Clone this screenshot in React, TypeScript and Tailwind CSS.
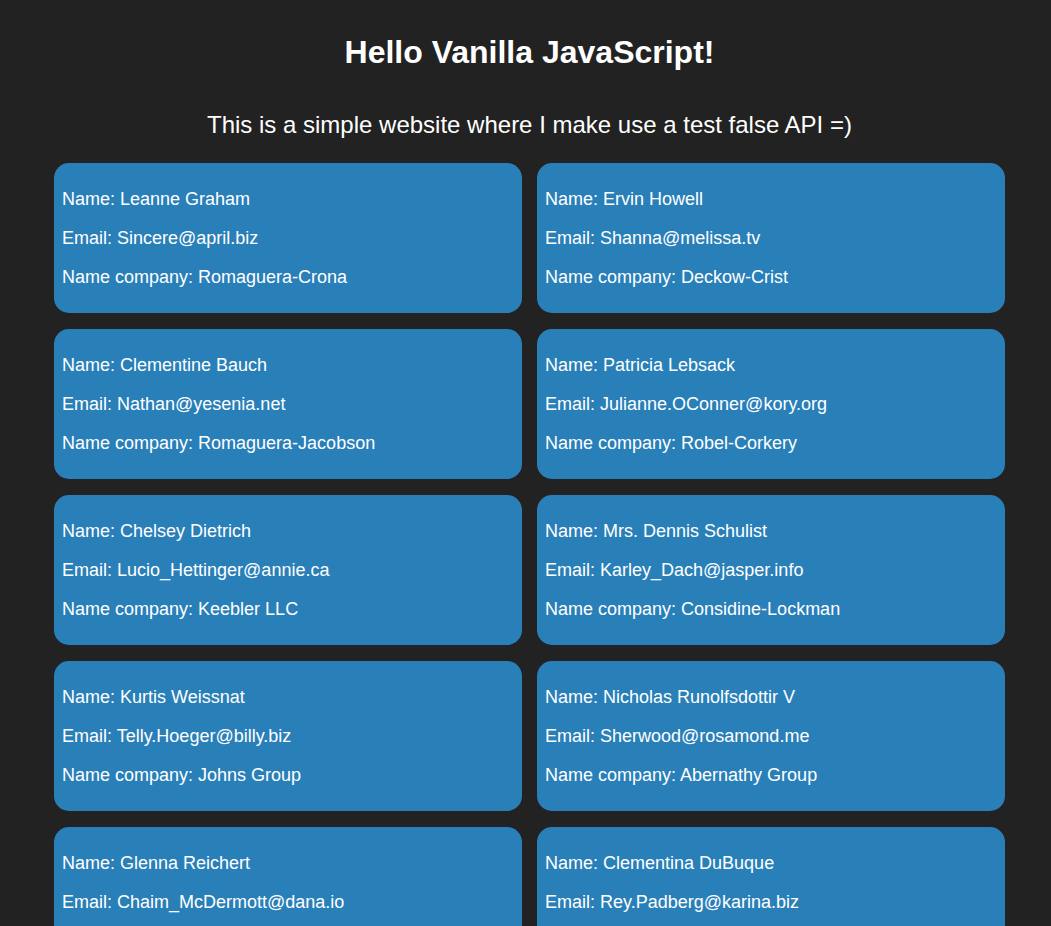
import React from "react";

const users = [
  { name: "Leanne Graham", email: "Sincere@april.biz", company: "Romaguera-Crona" },
  { name: "Ervin Howell", email: "Shanna@melissa.tv", company: "Deckow-Crist" },
  { name: "Clementine Bauch", email: "Nathan@yesenia.net", company: "Romaguera-Jacobson" },
  { name: "Patricia Lebsack", email: "Julianne.OConner@kory.org", company: "Robel-Corkery" },
  { name: "Chelsey Dietrich", email: "Lucio_Hettinger@annie.ca", company: "Keebler LLC" },
  { name: "Mrs. Dennis Schulist", email: "Karley_Dach@jasper.info", company: "Considine-Lockman" },
  { name: "Kurtis Weissnat", email: "Telly.Hoeger@billy.biz", company: "Johns Group" },
  { name: "Nicholas Runolfsdottir V", email: "Sherwood@rosamond.me", company: "Abernathy Group" },
  { name: "Glenna Reichert", email: "Chaim_McDermott@dana.io", company: "Yost and Sons" },
  { name: "Clementina DuBuque", email: "Rey.Padberg@karina.biz", company: "Hoeger LLC" },
];

export default function App() {
  return (
    <div
      className="min-h-screen bg-[#222222] text-white pb-[20px]"
      style={{ fontFamily: '"Liberation Sans", Arial, sans-serif' }}
    >
      <div className="ml-[54px] w-[951px] pt-[34px]">
        <h1 className="text-center text-[32px] leading-[37px] font-bold">Hello Vanilla JavaScript!</h1>
        <p className="mt-[40px] text-center text-[24px] leading-[28px]">
          This is a simple website where I make use a test false API =)
        </p>
        <div className="mt-[24px] grid grid-cols-[468px_468px] gap-x-[15px] gap-y-[16px]">
          {users.map((u) => (
            <div
              key={u.name}
              className="bg-[#2980b9] rounded-[15px] px-[8px] pt-[26px] pb-[25px] flex flex-col gap-[18px] text-[18px] leading-[21px]"
            >
              <p>Name: {u.name}</p>
              <p>Email: {u.email}</p>
              <p>Name company: {u.company}</p>
            </div>
          ))}
        </div>
      </div>
    </div>
  );
}
